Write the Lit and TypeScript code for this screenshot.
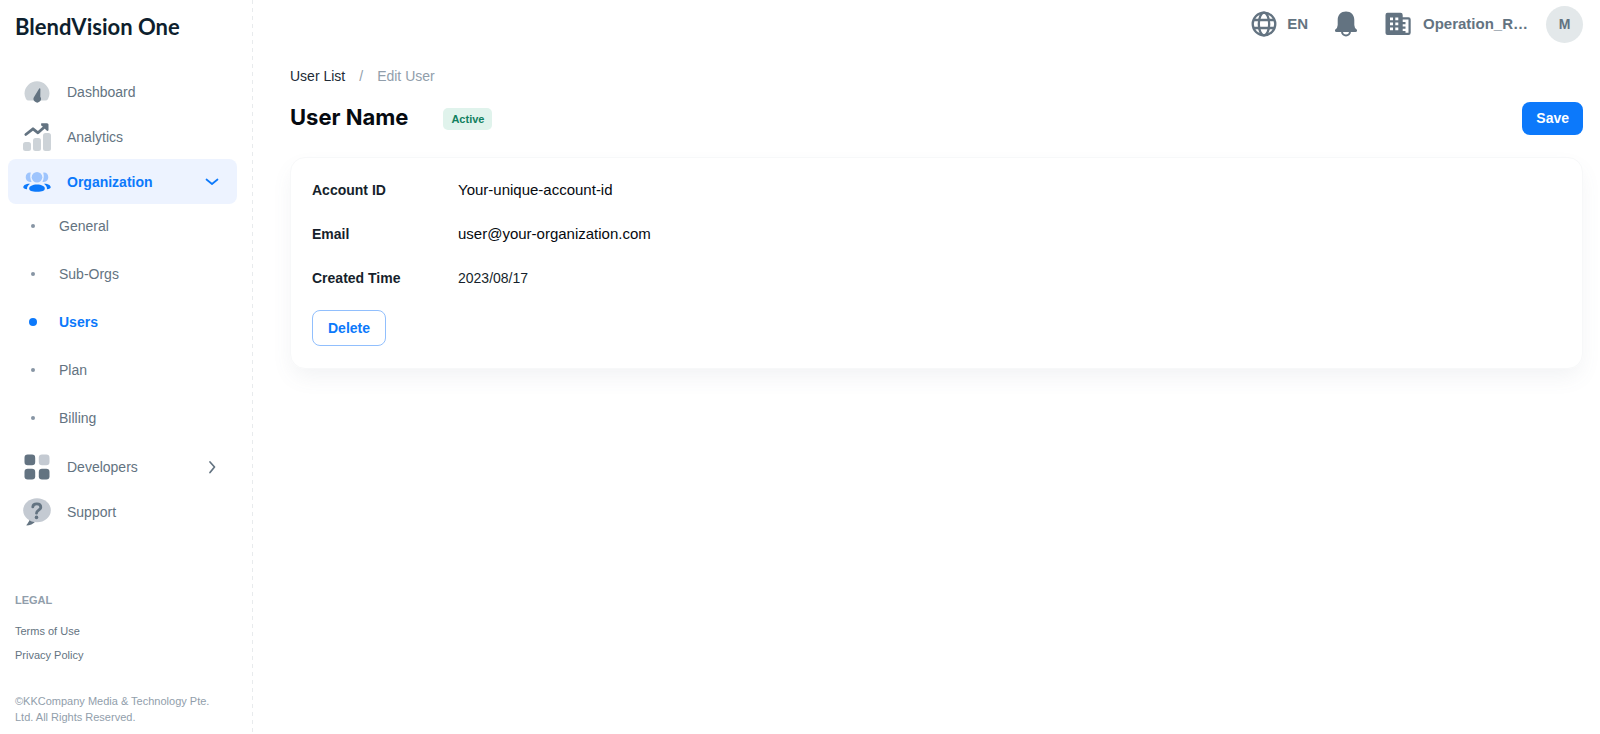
import { LitElement, html, css, svg, nothing } from "lit";
import { customElement, property } from "lit/decorators.js";

type NavItem = { label: string; icon: string; chevron?: "down" | "right"; active?: boolean };

const icons: Record<string, unknown> = {
  dashboard: svg`
    <path d="M5.6 22.6H22.4Q24.2 22.6 25 20.9Q26.500 18 26.500 15.500A12.500 12.200 0 0 0 1.500 15.500Q1.500 18 3 20.900Q3.800 22.600 5.600 22.600Z" fill="#cdd3d8"/>
    <path d="M16.700 10.300Q17.500 10.400 17.400 11.300L17.300 18.700A3.700 3.700 0 1 1 11.200 18.700L15.900 10.900Q16.200 10.300 16.700 10.300Z" fill="#637381"/>`,
  analytics: svg`
    <rect x="0" y="19" width="8" height="9" rx="2.500" fill="#cdd3d8"/>
    <rect x="10" y="15" width="8" height="13" rx="2.500" fill="#cdd3d8"/>
    <rect x="20" y="10" width="8" height="18" rx="2.500" fill="#cdd3d8"/>
    <path d="M2.800 11.500L10 5.800L15 9.800L22 3.500" fill="none" stroke="#637381" stroke-width="2.800" stroke-linecap="round" stroke-linejoin="round"/>
    <path d="M18.500 .300H24Q25.500 .300 25.500 1.800V7Q25 8.500 23.600 7.500L18.300 2.300Q17.500 .900 18.500 .300Z" fill="#637381"/>`,
  organization: svg`
    <g fill="#9ec4fd">
      <circle cx="14" cy="9.200" r="5.300"/>
      <path d="M7.800 4.700Q6.300 9.200 8.600 13.700C5 14.700 2.700 12.200 2.700 9.200S5 4.200 7.800 4.700Z"/>
      <path d="M20.200 4.700Q21.700 9.200 19.400 13.700C23 14.700 25.300 12.200 25.300 9.200S23 4.200 20.200 4.700Z"/>
    </g>
    <g fill="#0c79fb">
      <path d="M14 16.600C18.500 16.600 21.800 18.300 21.800 20.500C21.800 22.700 19.500 23.700 14 23.700S6.200 22.700 6.200 20.500C6.200 18.300 9.500 16.600 14 16.600Z"/>
      <path d="M7 15.800C3 15.600 .300 17.400 .300 19.200Q.300 20.800 4 21.200Q3.900 17.900 7 15.800Z"/>
      <path d="M21 15.800C25 15.600 27.700 17.400 27.700 19.200Q27.700 20.800 24 21.200Q24.100 17.900 21 15.800Z"/>
    </g>`,
  developers: svg`
    <g fill="#637381">
      <rect x="1.500" y="1.500" width="10.700" height="10.700" rx="3.200"/>
      <rect x="1.500" y="15.800" width="10.700" height="10.700" rx="3.200"/>
      <rect x="15.800" y="15.800" width="10.700" height="10.700" rx="3.200"/>
    </g>
    <rect x="15.800" y="1.500" width="10.700" height="10.700" rx="3.200" fill="#c4cad2"/>`,
  support: svg`
    <path d="M7 20L13 23Q8.500 27.500 3.500 27.500Q3 27 4.300 26Q6.500 23.500 7 20Z" fill="#637381"/>
    <ellipse cx="14" cy="12.300" rx="13.800" ry="12" fill="#c4cad2"/>
    <path d="M9.800 8.800C10.200 4.800 17.800 4.800 17.800 9.200C17.800 12.200 13.500 12.200 13.500 15.200" fill="none" stroke="#637381" stroke-width="2.800" stroke-linecap="round"/>
    <circle cx="13.500" cy="19.400" r="1.800" fill="#637381"/>`,
};

const topNav: NavItem[] = [
  { label: "Dashboard", icon: "dashboard" },
  { label: "Analytics", icon: "analytics" },
  { label: "Organization", icon: "organization", chevron: "down", active: true },
];
const bottomNav: NavItem[] = [
  { label: "Developers", icon: "developers", chevron: "right" },
  { label: "Support", icon: "support" },
];
const subNav = ["General", "Sub-Orgs", "Users", "Plan", "Billing"];

@customElement("side-nav")
class SideNav extends LitElement {
  @property() current = "Users";

  static styles = css`
    :host { display: flex; flex-direction: column; box-sizing: border-box; padding: 11px 16px 9px 8px;
      background: repeating-linear-gradient(to bottom, #e8ebed 0 4px, transparent 4px 8px) right top / 1px 100% no-repeat; }
    a { color: inherit; text-decoration: none; }
    ul { list-style: none; margin: 0; padding: 0; }
    .brand { font: 700 22px/32px Lato, "Open Sans", sans-serif; color: #0e1f2e; padding-left: 7px; margin-bottom: 26px; }
    .item { display: flex; align-items: center; gap: 16px; height: 45px; padding: 0 17px 0 15px; border-radius: 8px; }
    .active { background: #edf3ff; color: #0c79fb; font-weight: 700; }
    .icon { width: 28px; height: 28px; flex: none; }
    .label { flex: 1; }
    .chevron { width: 16px; height: 16px; fill: none; stroke: currentColor; stroke-width: 1.7; stroke-linecap: round; stroke-linejoin: round; }
    .sub { display: flex; flex-direction: column; gap: 4px; padding-bottom: 4px; }
    .child { display: flex; align-items: center; height: 44px; gap: 22px; padding-left: 21px; }
    .bullet { display: flex; justify-content: center; width: 8px; }
    .bullet::before { content: ""; width: 4px; height: 4px; border-radius: 50%; background: #8795a4; }
    .current { color: #0c79fb; font-weight: 700; }
    .current .bullet::before { width: 8px; height: 8px; background: #0c79fb; }
    footer { margin-top: auto; padding: 0 16px 0 7px; font-size: 11px; line-height: 16px; }
    h2 { margin: 0 0 15px; font-size: 11px; line-height: 16px; color: #919eab; }
    .legal { display: flex; flex-direction: column; gap: 8px; margin-bottom: 30px; }
    .copy { margin: 0; color: #919eab; }
  `;

  item(n: NavItem) {
    return html`<li><a class="item ${n.active ? "active" : ""}" href="#${n.icon}">
      <svg class="icon" viewBox="0 0 28 28" aria-hidden="true">${icons[n.icon]}</svg>
      <span class="label">${n.label}</span>
      ${n.chevron
        ? html`<svg class="chevron" viewBox="0 0 16 16" aria-hidden="true"><path d=${n.chevron === "down" ? "M2.500 5.500L8 10L13.500 5.500" : "M6 3L10.500 8L6 13.500"} /></svg>`
        : nothing}
    </a>${n.active
      ? html`<ul class="sub">${subNav.map((s) => html`<li><a class="child ${s === this.current ? "current" : ""}" href="#${s.toLowerCase()}"><span class="bullet"></span>${s}</a></li>`)}</ul>`
      : nothing}</li>`;
  }

  render() {
    return html`
      <div class="brand">BlendVision One</div>
      <nav><ul>${[...topNav, ...bottomNav].map((n) => this.item(n))}</ul></nav>
      <footer>
        <h2>LEGAL</h2>
        <ul class="legal"><li><a href="#terms">Terms of Use</a></li><li><a href="#privacy">Privacy Policy</a></li></ul>
        <p class="copy">©KKCompany Media &amp; Technology Pte. Ltd. All Rights Reserved.</p>
      </footer>`;
  }
}

@customElement("top-bar")
class TopBar extends LitElement {
  static styles = css`
    :host { display: flex; justify-content: flex-end; align-items: center; height: 48px; font-size: 15px; font-weight: 700; }
    button { display: flex; align-items: center; border: 0; padding: 0; background: none; font: inherit; color: inherit; }
    .lang { gap: 9px; margin-right: 24px; }
    .bell { margin-right: 24px; }
    .org { gap: 11px; margin-right: 18px; }
    svg { width: 28px; height: 28px; }
    .avatar { width: 37px; height: 37px; border-radius: 50%; justify-content: center; background: #e3e8ea; font-size: 14px; }
  `;
  render() {
    return html`
      <button class="lang"><svg viewBox="0 0 28 28" fill="none" stroke="currentColor" stroke-width="2.300" aria-hidden="true">
        <circle cx="14" cy="14" r="11.300"/><ellipse cx="14" cy="14" rx="5.200" ry="11.300"/><path d="M3.500 10H24.500M3.500 18H24.500"/></svg>EN</button>
      <button class="bell" aria-label="Notifications"><svg viewBox="0 0 28 28" fill="currentColor" aria-hidden="true">
        <path d="M14 1.600C19 1.600 22.300 5 22.300 10V15Q22.300 17.800 24.700 19.500Q25.800 21.900 23.500 21.900H4.500Q2.200 21.900 3.300 19.500Q5.700 17.800 5.700 15V10C5.700 5 9 1.600 14 1.600Z"/>
        <path d="M10 21.500A4 4 0 0 0 18 21.500" fill="none" stroke="currentColor" stroke-width="2"/></svg></button>
      <button class="org"><svg viewBox="0 0 28 28" aria-hidden="true">
        <path fill="currentColor" fill-rule="evenodd" d="M3.500 2.800H16.500Q18.700 2.800 18.700 5V7.300H24.500Q26.700 7.300 26.700 9.500V22.800Q26.700 25 24.500 25H3.500Q1.500 25 1.500 23V5Q1.500 2.800 3.500 2.800ZM6 7.500V10.300H9V7.500ZM11.300 7.500V10.300H14.300V7.500ZM6 12.500V15.300H9V12.500ZM11.300 12.500V15.300H14.300V12.500ZM6 17.500V20.300H9V17.500ZM11.300 17.500V20.300H14.300V17.500ZM18.700 9.600V12H21.500V14.300H18.700V16.500H21.500V18.800H18.700V21H21.500V22.800H24.500V9.600Z"/></svg>Operation_R…</button>
      <button class="avatar" aria-label="Account">M</button>`;
  }
}

@customElement("app-root")
class AppRoot extends LitElement {
  static styles = css`
    :host { display: grid; grid-template-columns: 253px 1fr; min-height: 100vh; background: #fff; color: #637381;
      font: 14px/20px "Liberation Sans", Arial, sans-serif; }
    .page { padding: 0 17px 24px 37px; min-width: 0; }
    .crumbs { display: flex; gap: 14px; margin-top: 18px; color: #919eab; }
    .crumbs a { color: #212b36; text-decoration: none; }
    .head { display: flex; align-items: center; margin-top: 16px; height: 33px; }
    h1 { margin: 0; padding-bottom: 4px; font: 700 22px/28px Inter, sans-serif; color: #060a10; }
    .badge { margin-left: 35px; padding: 0 8px; border-radius: 5px; background: #e0f3ec; color: #11805f; font-size: 11px; font-weight: 700; line-height: 22px; }
    button { font: 700 14px/20px "Liberation Sans", Arial, sans-serif; border-radius: 8px; }
    .save { margin-left: auto; border: 0; padding: 6px 14px 7px; background: #0c79fb; color: #fff; }
    .card { display: flex; flex-direction: column; align-items: flex-start; gap: 22px; margin-top: 22px; padding: 22px 21px; border: 1px solid #f7f8f9; border-radius: 15px;
      box-shadow: 0 10px 22px -3px rgba(99, 115, 129, 0.09); }
    dl { display: grid; grid-template-columns: 146px 1fr; row-gap: 24px; margin: 0; }
    dt { font-weight: 700; color: #161f2c; }
    dd { margin: 0; color: #161f2c; }
    .entry { color: #060a10; font-size: 15px; }
    .delete { padding: 7px 15px; border: 1px solid #91bffd; background: #fff; color: #0c79fb; }
  `;
  render() {
    return html`
      <side-nav></side-nav>
      <main class="page">
        <top-bar></top-bar>
        <nav class="crumbs" aria-label="Breadcrumb"><a href="#users">User List</a><span>/</span><span>Edit User</span></nav>
        <header class="head"><h1>User Name</h1><span class="badge">Active</span><button class="save">Save</button></header>
        <section class="card">
          <dl>
            <dt>Account ID</dt><dd class="entry">Your-unique-account-id</dd>
            <dt>Email</dt><dd class="entry">user@your-organization.com</dd>
            <dt>Created Time</dt><dd>2023/08/17</dd>
          </dl>
          <button class="delete">Delete</button>
        </section>
      </main>`;
  }
}
